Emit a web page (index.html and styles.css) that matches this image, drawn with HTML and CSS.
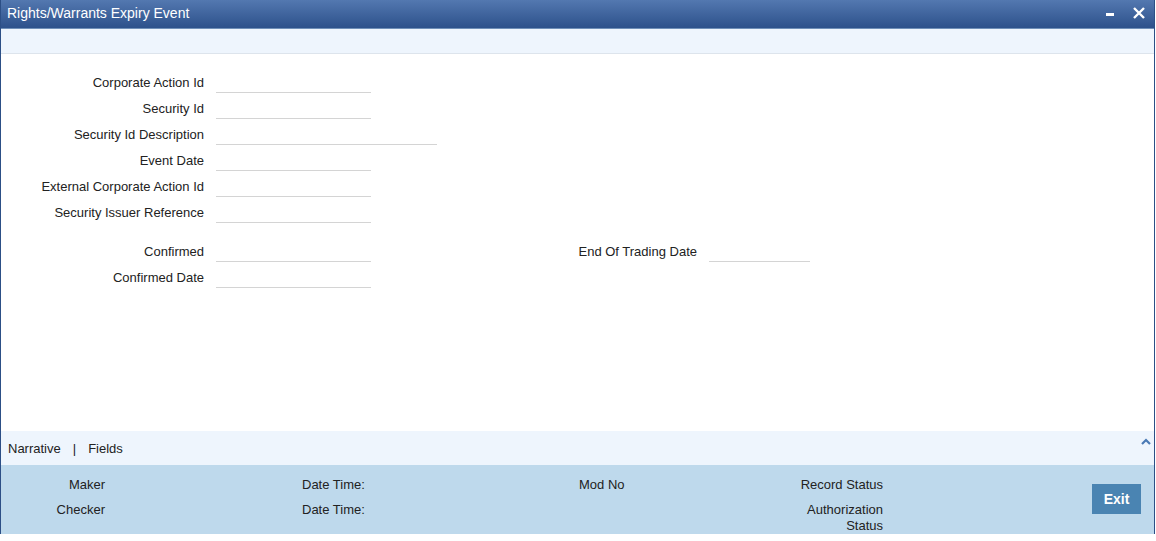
FILE: index.html
```html
<!DOCTYPE html>
<html lang="en">
<head>
    <meta charset="UTF-8">
    <title>Rights/Warrants Expiry Event</title>
    <link rel="stylesheet" href="styles.css">
</head>
<body>
    <div class="window">
        <div class="titlebar">
            <span class="title">Rights/Warrants Expiry Event</span>
            <div class="win-controls">
                <svg class="win-btn" width="12" height="12" viewBox="0 0 12 12"><rect x="2" y="6" width="8" height="3" fill="#fff"/></svg>
                <svg class="win-btn" width="14" height="14" viewBox="0 0 14 14"><path d="M2 2 L12 12 M12 2 L2 12" stroke="#fff" stroke-width="2.4"/></svg>
            </div>
        </div>
        <div class="toolbar"></div>

        <div class="content">
            <div class="group">
                <div class="field"><label>Corporate Action Id</label><span class="input"></span></div>
                <div class="field"><label>Security Id</label><span class="input"></span></div>
                <div class="field"><label>Security Id Description</label><span class="input wide"></span></div>
                <div class="field"><label>Event Date</label><span class="input"></span></div>
                <div class="field"><label>External Corporate Action Id</label><span class="input"></span></div>
                <div class="field"><label>Security Issuer Reference</label><span class="input"></span></div>
            </div>
            <div class="group second">
                <div class="row">
                    <div class="field"><label>Confirmed</label><span class="input"></span></div>
                    <div class="field right"><label>End Of Trading Date</label><span class="input short"></span></div>
                </div>
                <div class="field"><label>Confirmed Date</label><span class="input"></span></div>
            </div>
        </div>

        <div class="tabs">
            <span>Narrative</span>
            <span class="sep">|</span>
            <span>Fields</span>
            <svg class="collapse" width="10" height="7" viewBox="0 0 10 7"><path d="M1 6 L5 2 L9 6" stroke="#4a7ab5" stroke-width="2.2" fill="none"/></svg>
        </div>

        <div class="audit">
            <div class="audit-col who">
                <div>Maker</div>
                <div>Checker</div>
            </div>
            <div class="audit-col when">
                <div>Date Time:</div>
                <div>Date Time:</div>
            </div>
            <div class="audit-col mod">
                <div>Mod No</div>
            </div>
            <div class="audit-col status">
                <div>Record Status</div>
                <div>Authorization Status</div>
            </div>
            <button class="exit">Exit</button>
        </div>
    </div>
</body>
</html>
```

FILE: styles.css
```css
* {
    box-sizing: border-box;
    margin: 0;
    padding: 0;
}

body {
    background: #fff;
    font-family: 'Liberation Sans', Arial, sans-serif;
    font-size: 13px;
    color: #222;
}

.window {
    width: 1155px;
    height: 534px;
    border-left: 1px solid #2c4f86;
    border-right: 1px solid #2c4f86;
    display: flex;
    flex-direction: column;
}

.titlebar {
    height: 29px;
    background: linear-gradient(#5378b0, #2d518b);
    border-bottom: 1px solid #6f8fb8;
    display: flex;
    align-items: center;
    padding: 0 6px 3px 6px;
    color: #fff;
}

.title {
    font-size: 14px;
}

.win-controls {
    margin-left: auto;
    display: flex;
    align-items: center;
    gap: 16px;
    margin-right: 2px;
}

.toolbar {
    height: 25px;
    background: #eef5fd;
    border-bottom: 1px solid #dde4ec;
}

.content {
    flex: 1;
    padding-top: 18px;
}

.group.second {
    margin-top: 13px;
}

.row {
    display: flex;
}

.field {
    display: flex;
    height: 26px;
}

.field label {
    width: 203px;
    text-align: right;
    line-height: 20px;
    padding-top: 1px;
}

.input {
    display: block;
    margin-left: 12px;
    width: 155px;
    height: 21px;
    border-bottom: 1px solid #d4d4d4;
}

.input.wide {
    width: 221px;
}

.input.short {
    width: 101px;
}

.field.right {
    margin-left: 123px;
}

.tabs {
    height: 34px;
    background: #eef5fd;
    display: flex;
    align-items: center;
    padding-left: 7px;
    padding-top: 1px;
}

.tabs .sep {
    margin: 0 12px;
}

.collapse {
    margin-left: auto;
    margin-right: 3px;
    margin-bottom: 15px;
}

.audit {
    height: 69px;
    background: #bed9ec;
    display: flex;
    padding-top: 12px;
}

.audit-col div {
    line-height: 16px;
    margin-bottom: 9px;
}

.audit-col.who {
    width: 104px;
    text-align: right;
}

.audit-col.when {
    margin-left: 197px;
    width: 200px;
}

.audit-col.mod {
    margin-left: 77px;
    width: 120px;
}

.audit-col.status {
    margin-left: 84px;
    width: 100px;
    text-align: right;
}

.audit-col.status div:last-child {
    margin-left: 10px;
}

.exit {
    margin-left: auto;
    margin-right: 13px;
    margin-top: 7px;
    width: 49px;
    height: 30px;
    background: #4a84b2;
    color: #fff;
    border: none;
    font-family: 'Liberation Sans', Arial, sans-serif;
    font-size: 14px;
    font-weight: bold;
}
```
